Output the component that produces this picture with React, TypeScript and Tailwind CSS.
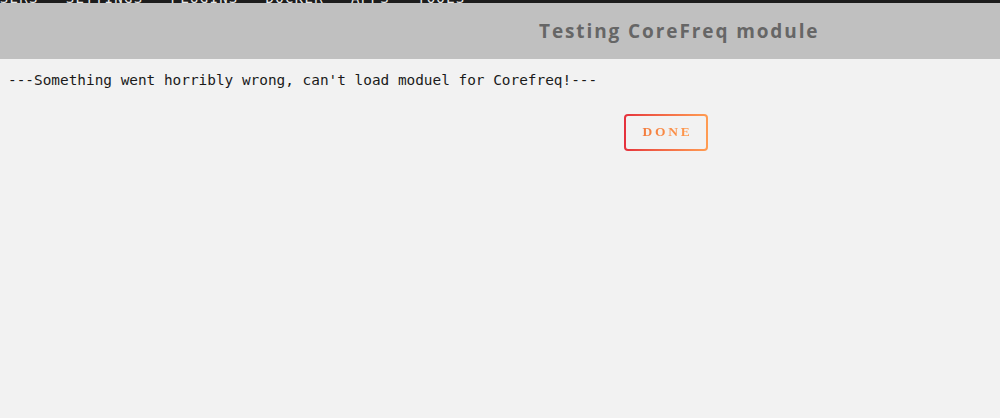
export default function App() {
  const menu = ["Users", "Settings", "Plugins", "Docker", "Apps", "Tools"];
  return (
    <div className="w-[1000px] h-[418px] bg-[#f2f2f2] overflow-hidden flex flex-col">
      {/* clipped top navigation strip */}
      <div className="h-[3px] bg-[#1c1c1c] overflow-hidden shrink-0">
        <div
          className="flex gap-[27px] -mt-[9px] -ml-[10px] text-[#e6e6e6] text-[14px] leading-[14px] uppercase tracking-[1.3px] whitespace-nowrap"
          style={{ fontFamily: '"DejaVu Sans Mono", monospace' }}
        >
          {menu.map((m) => (
            <span key={m}>{m}</span>
          ))}
        </div>
      </div>

      {/* title bar */}
      <div className="h-[56px] bg-[#c0c0c0] shrink-0 flex items-center pl-[539px]">
        <h1
          className="text-[19px] font-bold tracking-[1.9px] text-[#666666] leading-none"
          style={{ fontFamily: '"Open Sans", sans-serif' }}
        >
          Testing CoreFreq module
        </h1>
      </div>

      {/* log output */}
      <div className="px-[8px] pt-[12px]">
        <pre
          className="text-[14.4px] leading-[18px] text-[#1a1a1a]"
          style={{ fontFamily: '"DejaVu Sans Mono", monospace' }}
        >
          ---Something went horribly wrong, can't load moduel for Corefreq!---
        </pre>
      </div>

      <div className="pl-[624px] pt-[25px]">
        <button className="w-[84px] h-[37px] p-[2px] rounded-[4px] bg-gradient-to-r from-[#e5303d] to-[#ff9c52]">
          <span className="flex items-center justify-center w-full h-full rounded-[2px] bg-[#f2f2f2]">
            <span
              className="text-[13.5px] font-bold tracking-[2.8px] pl-[3px] bg-gradient-to-r from-[#f27a3c] to-[#ff9a4e] bg-clip-text text-transparent"
              style={{ fontFamily: '"Liberation Serif", serif' }}
            >
              DONE
            </span>
          </span>
        </button>
      </div>
    </div>
  );
}
